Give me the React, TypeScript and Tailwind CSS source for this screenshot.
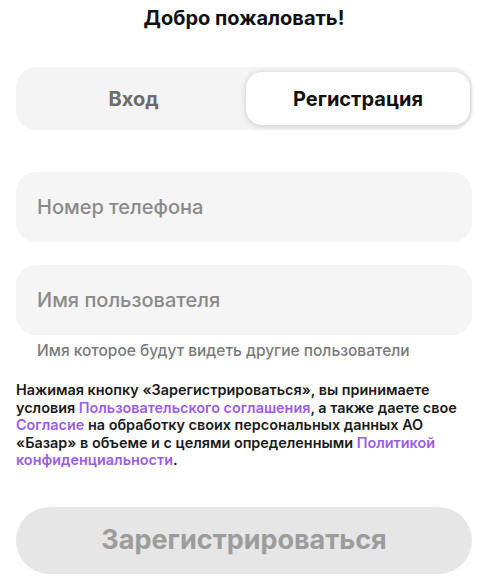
export default function App() {
  return (
    <div
      className="w-[488px] h-[579px] bg-white overflow-hidden flex flex-col px-4"
      style={{ fontFamily: "Inter, 'Noto Sans', sans-serif" }}
    >
      <h1 className="pt-[6px] text-center text-[20px] leading-[25px] font-bold text-[#111]">
        Добро пожаловать!
      </h1>

      <div className="mt-[36px] h-[63px] rounded-[20px] bg-[#f4f4f4] p-[5px] flex">
        <button className="flex-1 text-[20px] font-bold text-[#6b6b6b]">Вход</button>
        <button className="w-[224px] -mr-[3px] rounded-[16px] bg-white shadow-[0_1px_6px_rgba(0,0,0,0.18)] text-[20px] font-bold text-[#111]">
          Регистрация
        </button>
      </div>

      <div className="mt-[42px] h-[70px] rounded-[20px] bg-[#f5f5f5] flex items-center px-[21px]">
        <span className="text-[20px] font-medium text-[#8a8a8a]">Номер телефона</span>
      </div>

      <div className="mt-[23px] h-[70px] rounded-[20px] bg-[#f5f5f5] flex items-center px-[21px]">
        <span className="text-[20px] font-medium text-[#8a8a8a]">Имя пользователя</span>
      </div>

      <p className="mt-[6px] pl-[21px] text-[15.5px] leading-[20px] font-medium text-[#7a7a7a]">
        Имя которое будут видеть другие пользователи
      </p>

      <p className="mt-[20px] text-[14.4px] leading-[17.5px] font-semibold text-[#1a1a1a] pr-[10px]">
        Нажимая кнопку «Зарегистрироваться», вы принимаете условия{" "}
        <span className="text-[#9b5de5]">Пользовательского соглашения</span>, а также даете свое{" "}
        <span className="text-[#9b5de5]">Согласие</span> на обработку своих персональных данных АО
        «Базар» в объеме и с целями определенными{" "}
        <span className="text-[#9b5de5]">Политикой конфиденциальности</span>.
      </p>

      <button className="mt-[38px] h-[67px] rounded-full bg-[#e6e6e6] text-[27px] font-bold text-[#9c9c9c]">
        Зарегистрироваться
      </button>
    </div>
  )
}
